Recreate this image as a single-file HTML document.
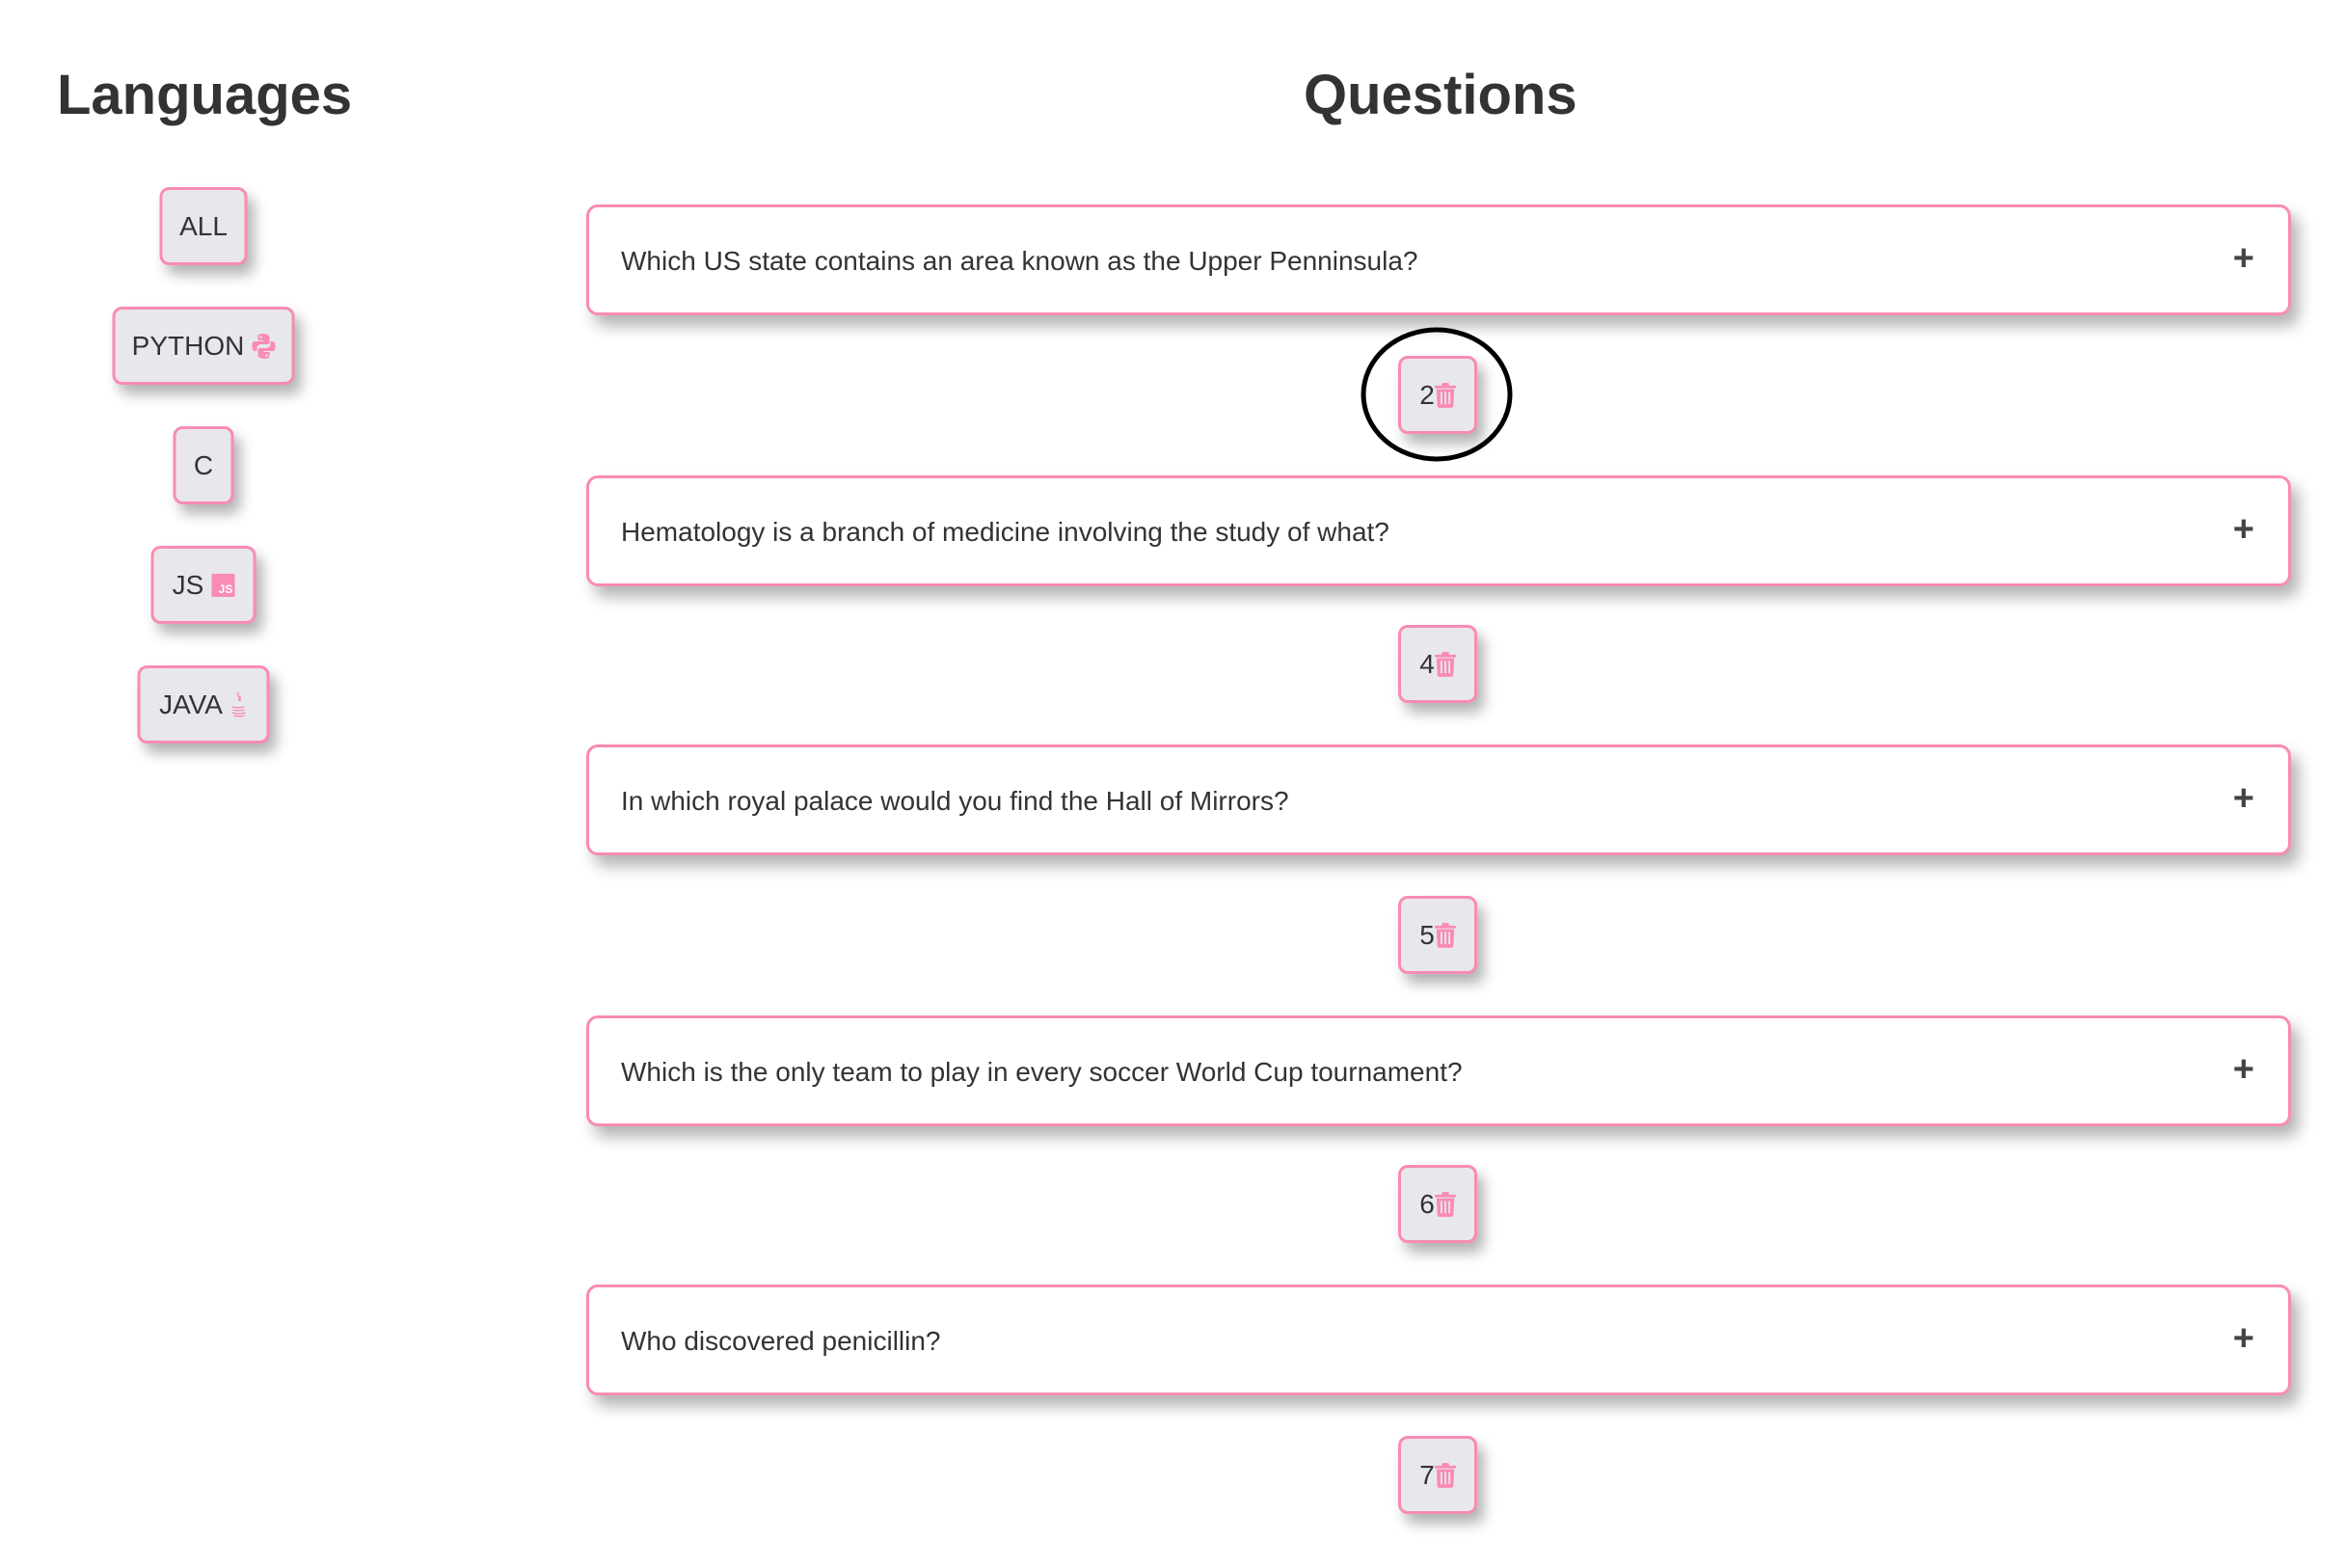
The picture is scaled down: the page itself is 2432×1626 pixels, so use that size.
<!DOCTYPE html>
<html><head><meta charset="utf-8"><style>
*{box-sizing:border-box;margin:0;padding:0}
body{width:2432px;height:1626px;background:#fff;font-family:"Liberation Sans",Arial,sans-serif;color:#333;position:relative;overflow:hidden}
h1{position:absolute;font-size:58px;font-weight:bold;color:#333;top:65px}
.lb{position:absolute;height:81px;background:#e8e7ec;border:3px solid #f98bb5;border-radius:10px;box-shadow:7px 10px 14px rgba(0,0,0,.3);font-size:28px;display:flex;align-items:center;justify-content:center;gap:8px;transform:translateX(-50%);left:211px}
.card{position:absolute;left:608px;width:1768px;height:115px;background:#fff;border:3px solid #f98bb5;border-radius:12px;box-shadow:8px 11px 16px rgba(0,0,0,.3);font-size:28px;display:flex;align-items:center;padding-left:33px;padding-top:2px}
.card .p{position:absolute;right:35px;top:32px;font-size:38px;font-weight:bold;color:#444}
.sb{position:absolute;left:1450px;width:82px;height:81px;background:#e8e7ec;border:3px solid #f98bb5;border-radius:10px;box-shadow:7px 10px 14px rgba(0,0,0,.3);font-size:28px;display:flex;align-items:center;justify-content:center}
</style></head><body>
<h1 style="left:59px">Languages</h1>
<h1 style="left:1352px">Questions</h1>

<div class="lb" style="top:194px;width:91px">ALL</div>
<div class="lb" style="top:318px;width:189px">PYTHON
<svg width="24" height="26" viewBox="0 0 24 26"><path fill="#f98bb5" d="M11 0C6 0 6 2 6 4v3h6v1H3C0 8 0 11 0 13s0 5 3 5h2v-3c0-2 2-4 4-4h6c2 0 3-1 3-3V4c0-2-2-4-7-4z"/><path fill="#f98bb5" d="M13 26c5 0 5-2 5-4v-3h-6v-1h9c3 0 3-3 3-5s0-5-3-5h-2v3c0 2-2 4-4 4H9c-2 0-3 1-3 3v4c0 2 2 4 7 4z"/><circle cx="9" cy="3.5" r="1.3" fill="#e8e7ec"/><circle cx="15" cy="22.5" r="1.3" fill="#e8e7ec"/></svg></div>
<div class="lb" style="top:442px;width:63px">C</div>
<div class="lb" style="top:566px;width:109px">JS <span style="display:inline-block;width:24px;height:24px;background:#f98bb5;color:#fff;font-size:12px;font-weight:bold;line-height:12px;text-align:right;padding:10px 2px 0 0">JS</span></div>
<div class="lb" style="top:690px;width:137px">JAVA
<svg width="18" height="28" viewBox="0 0 18 28" fill="none" stroke="#f98bb5" stroke-width="1.4"><path d="M9 1c-3 4 3 5 0 9M11 5c-2 2 1 3-1 5"/><path d="M2 16c4 1 10 1 13 0M3 19c4 1 9 1 12 0M2 22c5 1.5 10 1.5 14 0M4 25c3 1 8 1 11 0"/></svg></div>

<div class="card" style="top:212px">Which US state contains an area known as the Upper Penninsula?<span class="p">+</span></div>
<div class="card" style="top:493px">Hematology is a branch of medicine involving the study of what?<span class="p">+</span></div>
<div class="card" style="top:772px">In which royal palace would you find the Hall of Mirrors?<span class="p">+</span></div>
<div class="card" style="top:1053px">Which is the only team to play in every soccer World Cup tournament?<span class="p">+</span></div>
<div class="card" style="top:1332px">Who discovered penicillin?<span class="p">+</span></div>

<svg width="0" height="0" style="position:absolute"><defs><symbol id="t" viewBox="0 0 24 28"><rect x="0" y="3" width="24" height="3" rx="1" fill="#f98bb5"/><rect x="8" y="0" width="8" height="4" rx="1" fill="#f98bb5"/><path d="M2 7h20l-1 19c0 1-1 2-2 2H5c-1 0-2-1-2-2z" fill="#f98bb5"/><path d="M7.5 10v14M12 10v14M16.5 10v14" stroke="#e8e7ec" stroke-width="2"/></symbol></defs></svg>
<div class="sb" style="top:369px">2<svg width="22" height="26"><use href="#t"/></svg></div>
<div class="sb" style="top:648px">4<svg width="22" height="26"><use href="#t"/></svg></div>
<div class="sb" style="top:929px">5<svg width="22" height="26"><use href="#t"/></svg></div>
<div class="sb" style="top:1208px">6<svg width="22" height="26"><use href="#t"/></svg></div>
<div class="sb" style="top:1489px">7<svg width="22" height="26"><use href="#t"/></svg></div>

<svg style="position:absolute;left:1405px;top:336px" width="170" height="146"><ellipse cx="85" cy="73" rx="76" ry="67" fill="none" stroke="#000" stroke-width="5"/></svg>
</body></html>
